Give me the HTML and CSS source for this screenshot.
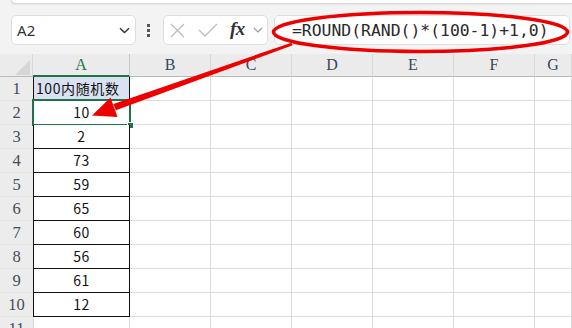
FILE: index.html
```html
<!DOCTYPE html>
<html lang="zh">
<head>
<meta charset="utf-8">
<link rel="stylesheet" href="styles.css">
</head>
<body>
<div class="app">
  <div class="topbar"></div>
  <div class="toolbar">
    <div class="namebox">
      <span class="ref">A2</span>
      <svg class="chev" width="11" height="7" viewBox="0 0 11 7"><path d="M1 1.2 L5.5 5.6 L10 1.2" fill="none" stroke="#333" stroke-width="1.4"/></svg>
    </div>
    <div class="dots"><i></i><i></i><i></i></div>
    <div class="fnbox">
      <svg class="ico-x" width="15" height="15" viewBox="0 0 15 15"><path d="M1 1 L14 14 M14 1 L1 14" stroke="#bdbdbd" stroke-width="1.3" fill="none"/></svg>
      <svg class="ico-ok" width="20" height="14" viewBox="0 0 20 14"><path d="M1 7 L7 13 L19 1" stroke="#bdbdbd" stroke-width="1.3" fill="none"/></svg>
      <span class="fx">fx</span>
      <svg class="chev2" width="10" height="6" viewBox="0 0 10 6"><path d="M1 1 L5 5 L9 1" fill="none" stroke="#999" stroke-width="1.2"/></svg>
    </div>
    <div class="formula">=ROUND(RAND()*(100-1)+1,0)</div>
  </div>

  <div class="sheet">
    <div class="row head">
      <div class="corner"><svg width="33" height="23" viewBox="0 0 33 23"><path d="M15 21 L30 21 L30 6 Z" fill="#d6d6d6"/></svg></div>
      <div class="ch sel">A</div>
      <div class="ch">B</div>
      <div class="ch">C</div>
      <div class="ch">D</div>
      <div class="ch">E</div>
      <div class="ch">F</div>
      <div class="ch">G</div>
    </div>
    <div class="row"><div class="rh">1</div><div class="c a title">100内随机数</div><div class="c"></div><div class="c"></div><div class="c"></div><div class="c"></div><div class="c"></div><div class="c"></div></div>
    <div class="row"><div class="rh">2</div><div class="c a active">10<span class="selbox"></span><span class="handle"></span></div><div class="c"></div><div class="c"></div><div class="c"></div><div class="c"></div><div class="c"></div><div class="c"></div></div>
    <div class="row"><div class="rh">3</div><div class="c a">2</div><div class="c"></div><div class="c"></div><div class="c"></div><div class="c"></div><div class="c"></div><div class="c"></div></div>
    <div class="row"><div class="rh">4</div><div class="c a">73</div><div class="c"></div><div class="c"></div><div class="c"></div><div class="c"></div><div class="c"></div><div class="c"></div></div>
    <div class="row"><div class="rh">5</div><div class="c a">59</div><div class="c"></div><div class="c"></div><div class="c"></div><div class="c"></div><div class="c"></div><div class="c"></div></div>
    <div class="row"><div class="rh">6</div><div class="c a">65</div><div class="c"></div><div class="c"></div><div class="c"></div><div class="c"></div><div class="c"></div><div class="c"></div></div>
    <div class="row"><div class="rh">7</div><div class="c a">60</div><div class="c"></div><div class="c"></div><div class="c"></div><div class="c"></div><div class="c"></div><div class="c"></div></div>
    <div class="row"><div class="rh">8</div><div class="c a">56</div><div class="c"></div><div class="c"></div><div class="c"></div><div class="c"></div><div class="c"></div><div class="c"></div></div>
    <div class="row"><div class="rh">9</div><div class="c a">61</div><div class="c"></div><div class="c"></div><div class="c"></div><div class="c"></div><div class="c"></div><div class="c"></div></div>
    <div class="row"><div class="rh">10</div><div class="c a">12</div><div class="c"></div><div class="c"></div><div class="c"></div><div class="c"></div><div class="c"></div><div class="c"></div></div>
    <div class="row"><div class="rh">11</div><div class="c last"></div><div class="c"></div><div class="c"></div><div class="c"></div><div class="c"></div><div class="c"></div><div class="c"></div></div>
  </div>

  <svg class="annot" width="572" height="328" viewBox="0 0 572 328">
    <ellipse cx="420.5" cy="32" rx="147" ry="19.5" fill="none" stroke="#ee0000" stroke-width="3.6"/>
    <polygon points="292.6,45.3 291.4,42.7 113.4,104.0 115.8,110.2" fill="#ee0000"/>
    <polygon points="92,115.5 110.5,97.5 117.5,117" fill="#ee0000"/>
  </svg>
</div>
</body>
</html>
```
FILE: styles.css
```css
* { box-sizing: border-box; }
html, body { margin: 0; padding: 0; }
body {
  width: 572px;
  height: 328px;
  overflow: hidden;
  background: #f3f3f3;
  font-family: "Noto Sans", "Noto Sans CJK SC", sans-serif;
}
.app { position: relative; width: 572px; height: 328px; overflow: hidden; }

.topbar {
  margin-left: 11px;
  height: 4px;
  background: #ffffff;
  border-bottom: 1px solid #d8d8d8;
  border-left: 1px solid #d8d8d8;
  border-radius: 0 0 0 6px;
  box-shadow: 0 1px 2px rgba(0,0,0,0.06);
}

.toolbar {
  display: flex;
  align-items: center;
  height: 30px;
  margin-top: 11px;
  padding-left: 11px;
}
.namebox, .fnbox, .formula {
  height: 30px;
  background: #ffffff;
  border: 1px solid #dedede;
  border-radius: 5px;
  display: flex;
  align-items: center;
}
.namebox { width: 125px; padding: 0 5px 0 5px; justify-content: space-between; }
.ref { font-size: 15px; color: #333; letter-spacing: 0.2px; }

.dots { display: flex; flex-direction: column; gap: 2px; margin-left: 11px; width: 3px; }
.dots i { display: block; width: 3px; height: 3px; background: #555; }

.fnbox { width: 105px; margin-left: 13px; padding-left: 6px; }
.ico-x { margin-right: 13px; }
.ico-ok { margin-right: 12px; }
.fx {
  font-family: "Liberation Serif", serif;
  font-style: italic;
  font-weight: bold;
  font-size: 19px;
  color: #333;
  line-height: 1;
  margin-top: -3px;
  letter-spacing: -0.5px;
}
.chev2 { margin-left: 8px; }

.formula {
  width: 296px;
  margin-left: 6px;
  padding-left: 17px;
  font-family: "DejaVu Sans Mono", monospace;
  font-size: 16.4px;
  color: #2a2a2a;
  white-space: nowrap;
}

.sheet { margin-top: 9px; }
.row {
  display: grid;
  grid-template-columns: 33px 97px 81px 81px 81px 81px 81px 1fr;
  grid-template-rows: 24px;
  height: 24px;
}
.row.head { height: 23px; grid-template-rows: 23px; background: #ebebeb; }
.corner { border-right: 1px solid #d8d8d8; border-bottom: 1px solid #b9b9b9; }
.corner svg { display: block; }
.ch {
  font-family: "Liberation Serif", serif;
  font-size: 16px;
  color: #3a4658;
  text-align: center;
  line-height: 22px;
  border-right: 1px solid #d8d8d8;
  border-bottom: 1px solid #b9b9b9;
}
.ch.sel { color: #217346; border-bottom: 2px solid #217346; border-right-color: #c8c8c8; line-height: 21px; }

.rh {
  background: #ececec;
  font-family: "Liberation Serif", serif;
  font-size: 16.5px;
  color: #444c58;
  text-align: center;
  line-height: 23px;
  border-bottom: 1px solid #e2e2e2;
}
.c {
  background: #fff;
  border-right: 1px solid #dcdcdc;
  border-bottom: 1px solid #dcdcdc;
}
.c.a {
  position: relative;
  border-left: 1px solid #111;
  border-right: 1px solid #111;
  border-bottom: 1px solid #111;
  font-family: "Noto Sans CJK SC", sans-serif;
  font-size: 14px;
  color: #111;
  text-align: center;
  line-height: 23px;
  letter-spacing: 0.6px;
}
.c.title {
  background: #d9e1f2;
  text-align: left;
  padding-left: 2px;
  white-space: nowrap;
}
.c.last { border-left: 1px solid #dcdcdc; }

.selbox {
  position: absolute;
  left: -2px; top: -2px; right: -2px; bottom: -2px;
  border: 2px solid #217346;
}
.handle {
  position: absolute;
  right: -5px; bottom: -5px;
  width: 5px; height: 5px;
  background: #217346;
  border: 1px solid #fff;
  box-sizing: content-box;
}

.annot { position: absolute; left: 0; top: 0; pointer-events: none; }
```
